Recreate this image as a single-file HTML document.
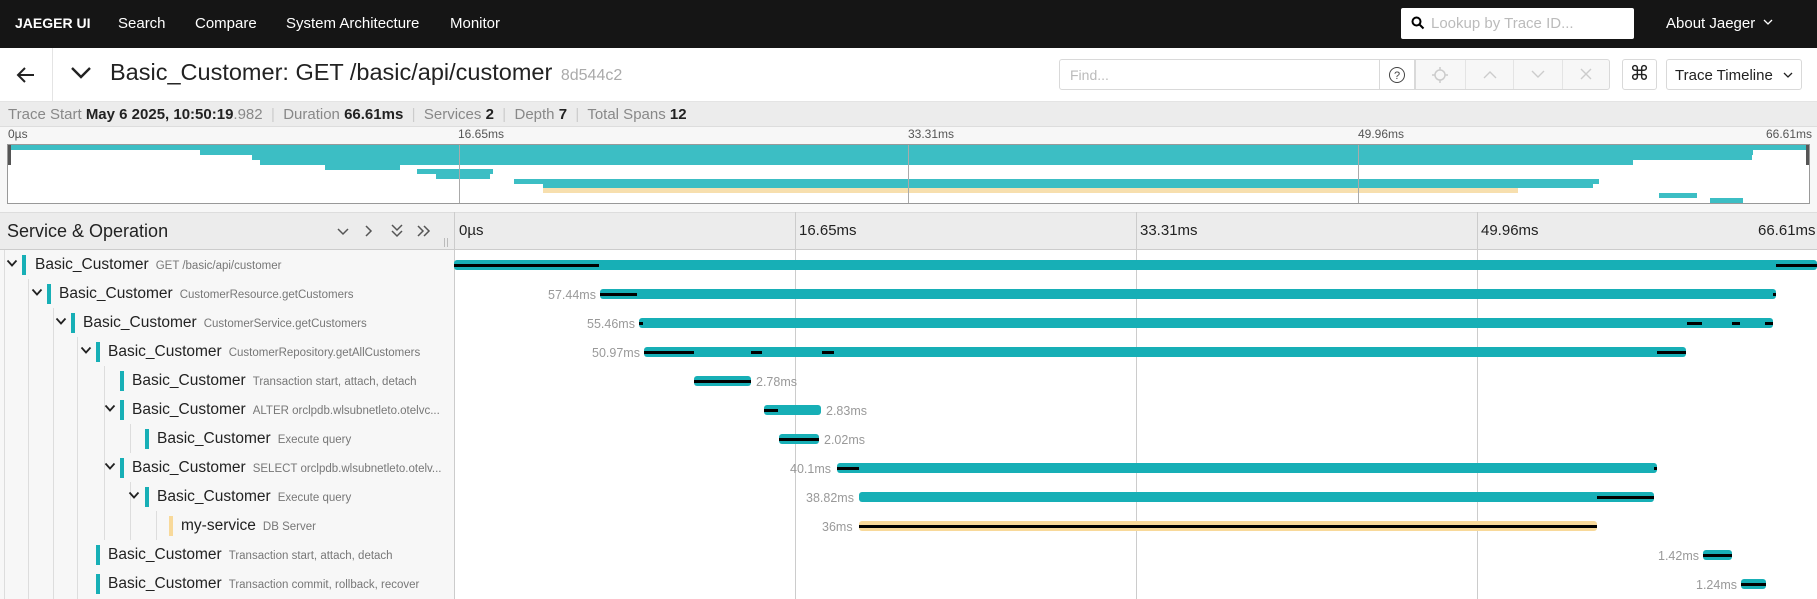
<!DOCTYPE html>
<html><head><meta charset="utf-8"><style>
*{box-sizing:border-box;margin:0;padding:0}
body{width:1817px;height:599px;overflow:hidden;font-family:"Liberation Sans",sans-serif;background:#fff;position:relative;color:#222}
.a{position:absolute}
.nav{left:0;top:0;width:1817px;height:48px;background:#151515;color:#fff;font-size:15px}
.nav span{position:absolute;top:15px}
.btn{position:absolute;top:59px;height:31px;border:1px solid #d9d9d9;background:#fff}
.row{position:absolute;left:0;width:454px;height:29px}
.svc{position:absolute;top:6px;font-size:15.5px;color:#222;white-space:nowrap}
.op{font-size:11.5px;color:#777;margin-left:7px}
.cb{position:absolute;top:5px;width:4px;height:20px;background:#17afb6}
.tg{position:absolute;top:9px;width:12px;height:9px}
.g{position:absolute;width:1px;background:#ddd}
.bar{position:absolute;height:10px;background:#17afb6;border-radius:3px}
.cp{position:absolute;height:3px;background:#000;top:3.5px}
.lb{position:absolute;font-size:12.5px;color:#999;white-space:nowrap}
.mm{position:absolute;background:#3cbec4;height:5px}
.tk{position:absolute;top:127px;font-size:12px;color:#555}
</style></head><body>
<svg width="0" height="0" style="position:absolute"><defs><symbol id="chev" viewBox="0 0 12 9"><path d="M1.5 1.5l4.5 5 4.5-5" fill="none" stroke="#222" stroke-width="1.8"/></symbol></defs></svg>
<div class="a nav">
<span style="left:15px;font-weight:bold;font-size:14px">JAEGER UI</span>
<span style="left:118px">Search</span>
<span style="left:195px">Compare</span>
<span style="left:286px">System Architecture</span>
<span style="left:450px">Monitor</span>
<div class="a" style="left:1401px;top:8px;width:233px;height:31px;background:#fff;border-radius:2px"><svg class="a" style="left:10px;top:8px" width="14" height="14" viewBox="0 0 14 14"><circle cx="5.5" cy="5.5" r="4" fill="none" stroke="#000" stroke-width="2"/><path d="M8.5 8.5l4 4" stroke="#000" stroke-width="2"/></svg><span style="left:30px;top:7px;color:#bbb;font-size:15px">Lookup by Trace ID...</span></div>
<span style="left:1666px">About Jaeger</span>
<svg class="a" style="left:1763px;top:19px" width="10" height="8"><path d="M1 1l4 4 4-4" fill="none" stroke="#fff" stroke-width="1.3"/></svg>
</div>
<div class="a" style="left:0;top:48px;width:1817px;height:54px;background:#fff;border-bottom:1px solid #e4e4e4"></div>
<div class="a" style="left:52px;top:48px;width:1px;height:54px;background:#e4e4e4"></div>
<svg class="a" style="left:16px;top:66px" width="20" height="18"><path d="M18 9H3M9 2L2 9l7 7" fill="none" stroke="#222" stroke-width="2"/></svg>
<svg class="a" style="left:70px;top:66px" width="22" height="14"><path d="M2 2l9 9 9-9" fill="none" stroke="#222" stroke-width="2.4"/></svg>
<div class="a" style="left:110px;top:59px;font-size:23.5px;color:#222;white-space:nowrap">Basic_Customer: GET /basic/api/customer <span style="font-size:16px;color:#aaa;margin-left:2px">8d544c2</span></div>
<div class="btn" style="left:1059px;width:321px;border-radius:3px 0 0 3px"><span class="a" style="left:10px;top:7px;color:#bbb;font-size:14px">Find...</span></div>
<div class="btn" style="left:1379px;width:36px"><svg class="a" style="left:8px;top:6px" width="18" height="18"><circle cx="9" cy="9" r="7.5" fill="none" stroke="#444"/><text x="9" y="13" font-size="11" text-anchor="middle" fill="#444" font-family="Liberation Sans">?</text></svg></div>
<div class="btn" style="left:1415px;width:195px;background:#f7f7f7;border-radius:0 3px 3px 0"></div>
<div class="a" style="left:1465px;top:60px;width:1px;height:29px;background:#e4e4e4"></div>
<div class="a" style="left:1513px;top:60px;width:1px;height:29px;background:#e4e4e4"></div>
<div class="a" style="left:1562px;top:60px;width:1px;height:29px;background:#e4e4e4"></div>
<svg class="a" style="left:1431px;top:66px" width="18" height="18"><circle cx="9" cy="9" r="5" fill="none" stroke="#ccc" stroke-width="1.5"/><path d="M9 1v3M9 14v3M1 9h3M14 9h3" stroke="#ccc" stroke-width="1.5"/></svg>
<svg class="a" style="left:1483px;top:70px" width="14" height="9"><path d="M1 8l6-6 6 6" fill="none" stroke="#ccc" stroke-width="1.4"/></svg>
<svg class="a" style="left:1531px;top:70px" width="14" height="9"><path d="M1 1l6 6 6-6" fill="none" stroke="#ccc" stroke-width="1.4"/></svg>
<svg class="a" style="left:1580px;top:68px" width="12" height="12"><path d="M1 1l10 10M11 1L1 11" stroke="#ccc" stroke-width="1.4"/></svg>
<div class="btn" style="left:1622px;width:35px;border-radius:3px;font-size:20px;text-align:center;line-height:28px">⌘</div>
<div class="btn" style="left:1666px;width:136px;border-radius:3px"><span class="a" style="left:8px;top:7px;font-size:15px">Trace Timeline</span><svg class="a" style="left:116px;top:12px" width="10" height="7"><path d="M1 1l4 4 4-4" fill="none" stroke="#222" stroke-width="1.3"/></svg></div>
<div class="a" style="left:0;top:102px;width:1817px;height:25px;background:#ececec;border-bottom:1px solid #ddd;font-size:15px;color:#888;padding:4px 0 0 8px;white-space:nowrap">Trace Start <b style="color:#222">May 6 2025, 10:50:19</b>.982 <span style="color:#ccc">&nbsp;|&nbsp;</span> Duration <b style="color:#222">66.61ms</b> <span style="color:#ccc">&nbsp;|&nbsp;</span> Services <b style="color:#222">2</b> <span style="color:#ccc">&nbsp;|&nbsp;</span> Depth <b style="color:#222">7</b> <span style="color:#ccc">&nbsp;|&nbsp;</span> Total Spans <b style="color:#222">12</b></div>
<div class="a" style="left:0;top:127px;width:1817px;height:85px;background:#f7f7f7"></div>
<div class="tk" style="left:8px">0µs</div>
<div class="tk" style="left:458px">16.65ms</div>
<div class="tk" style="left:908px">33.31ms</div>
<div class="tk" style="left:1358px">49.96ms</div>
<div class="tk" style="left:1766px">66.61ms</div>
<div class="a" style="left:7px;top:144px;width:1803px;height:60px;background:#fff;border:1px solid #999;overflow:hidden">
<div class="mm" style="left:0;top:0;width:1803px"></div>
<div class="mm" style="left:192px;top:5px;width:1553px"></div>
<div class="mm" style="left:244px;top:10px;width:1500px"></div>
<div class="mm" style="left:252px;top:15px;width:1373px"></div>
<div class="mm" style="left:317px;top:20px;width:75px"></div>
<div class="mm" style="left:409px;top:24px;width:76px"></div>
<div class="mm" style="left:428px;top:29px;width:54px"></div>
<div class="mm" style="left:506px;top:34px;width:1085px"></div>
<div class="mm" style="left:535px;top:38px;width:1050px"></div>
<div class="mm" style="left:535px;top:43px;width:975px;background:#f7dfae"></div>
<div class="mm" style="left:1651px;top:48px;width:38px"></div>
<div class="mm" style="left:1702px;top:53px;width:33px"></div>
<div class="a" style="left:451px;top:0;width:1px;height:60px;background:#aaa"></div>
<div class="a" style="left:900px;top:0;width:1px;height:60px;background:#aaa"></div>
<div class="a" style="left:1350px;top:0;width:1px;height:60px;background:#aaa"></div>
<div class="a" style="left:0;top:0;width:3px;height:20px;background:#555"></div>
<div class="a" style="right:0;top:0;width:3px;height:20px;background:#555"></div>
</div>
<div class="a" style="left:0;top:212px;width:1817px;height:38px;background:#ececec;border-top:1px solid #ddd;border-bottom:1px solid #ccc"></div>
<div class="a" style="left:7px;top:221px;font-size:18px;color:#222">Service &amp; Operation</div>
<svg class="a" style="left:336px;top:224px" width="110" height="16" fill="none" stroke="#555" stroke-width="1.5"><path d="M2 5l5 5 5-5"/><path d="M30 2l5 5-5 5"/><path d="M56 1l5 5 5-5M56 7l5 5 5-5"/><path d="M82 2l5 5-5 5M88 2l5 5-5 5"/></svg>
<div class="a" style="left:444px;top:238px;width:4px;height:9px;border-left:1px solid #bbb;border-right:1px solid #bbb"></div>
<div class="a" style="left:454px;top:212px;width:1px;height:387px;background:#ccc"></div>
<div class="a" style="left:459px;top:222px;font-size:15px;color:#222">0µs</div>
<div class="a" style="left:799px;top:222px;font-size:15px;color:#222">16.65ms</div>
<div class="a" style="left:1140px;top:222px;font-size:15px;color:#222">33.31ms</div>
<div class="a" style="left:1481px;top:222px;font-size:15px;color:#222">49.96ms</div>
<div class="a" style="left:1758px;top:222px;font-size:15px;color:#222">66.61ms</div>
<div class="a" style="left:795px;top:212px;width:1px;height:387px;background:#ccc"></div>
<div class="a" style="left:1136px;top:212px;width:1px;height:387px;background:#ccc"></div>
<div class="a" style="left:1477px;top:212px;width:1px;height:387px;background:#ccc"></div>
<div class="a" style="left:0;top:250px;width:454px;height:349px;background:#f7f7f7"></div>
<div class="g" style="left:4px;top:250px;height:349px"></div>
<div class="g" style="left:28px;top:279px;height:320px"></div>
<div class="g" style="left:53px;top:308px;height:291px"></div>
<div class="g" style="left:77px;top:337px;height:262px"></div>
<div class="g" style="left:104px;top:366px;height:174px"></div>
<div class="g" style="left:130px;top:424px;height:29px"></div>
<div class="g" style="left:130px;top:482px;height:58px"></div>
<div class="g" style="left:156px;top:511px;height:29px"></div>

<div class="row" style="top:250px"><svg class="tg" style="left:6px"><use href="#chev"/></svg><div class="cb" style="left:22px"></div><div class="svc" style="left:35px">Basic_Customer<span class="op">GET /basic/api/customer</span></div></div>
<div class="row" style="top:279px"><svg class="tg" style="left:31px"><use href="#chev"/></svg><div class="cb" style="left:47px"></div><div class="svc" style="left:59px">Basic_Customer<span class="op">CustomerResource.getCustomers</span></div></div>
<div class="row" style="top:308px"><svg class="tg" style="left:55px"><use href="#chev"/></svg><div class="cb" style="left:71px"></div><div class="svc" style="left:83px">Basic_Customer<span class="op">CustomerService.getCustomers</span></div></div>
<div class="row" style="top:337px"><svg class="tg" style="left:80px"><use href="#chev"/></svg><div class="cb" style="left:96px"></div><div class="svc" style="left:108px">Basic_Customer<span class="op">CustomerRepository.getAllCustomers</span></div></div>
<div class="row" style="top:366px"><div class="cb" style="left:120px"></div><div class="svc" style="left:132px">Basic_Customer<span class="op">Transaction start, attach, detach</span></div></div>
<div class="row" style="top:395px"><svg class="tg" style="left:104px"><use href="#chev"/></svg><div class="cb" style="left:120px"></div><div class="svc" style="left:132px">Basic_Customer<span class="op">ALTER orclpdb.wlsubnetleto.otelvc...</span></div></div>
<div class="row" style="top:424px"><div class="cb" style="left:145px"></div><div class="svc" style="left:157px">Basic_Customer<span class="op">Execute query</span></div></div>
<div class="row" style="top:453px"><svg class="tg" style="left:104px"><use href="#chev"/></svg><div class="cb" style="left:120px"></div><div class="svc" style="left:132px">Basic_Customer<span class="op">SELECT orclpdb.wlsubnetleto.otelv...</span></div></div>
<div class="row" style="top:482px"><svg class="tg" style="left:128px"><use href="#chev"/></svg><div class="cb" style="left:145px"></div><div class="svc" style="left:157px">Basic_Customer<span class="op">Execute query</span></div></div>
<div class="row" style="top:511px"><div class="cb" style="left:169px;background:#f8d99a"></div><div class="svc" style="left:181px">my-service<span class="op">DB Server</span></div></div>
<div class="row" style="top:540px"><div class="cb" style="left:96px"></div><div class="svc" style="left:108px">Basic_Customer<span class="op">Transaction start, attach, detach</span></div></div>
<div class="row" style="top:569px"><div class="cb" style="left:96px"></div><div class="svc" style="left:108px">Basic_Customer<span class="op">Transaction commit, rollback, recover</span></div></div>

<div class="bar" style="left:454px;top:260px;width:1363px"><div class="cp" style="left:0;width:145px"></div><div class="cp" style="left:1322px;width:41px"></div></div>
<div class="lb" style="left:548px;top:288px">57.44ms</div>
<div class="bar" style="left:600px;top:289px;width:1176px"><div class="cp" style="left:0;width:37px"></div><div class="cp" style="left:1173px;width:3px"></div></div>
<div class="lb" style="left:587px;top:317px">55.46ms</div>
<div class="bar" style="left:639px;top:318px;width:1134px"><div class="cp" style="left:0;width:4px"></div><div class="cp" style="left:1048px;width:15px"></div><div class="cp" style="left:1093px;width:8px"></div><div class="cp" style="left:1126px;width:8px"></div></div>
<div class="lb" style="left:592px;top:346px">50.97ms</div>
<div class="bar" style="left:644px;top:347px;width:1042px"><div class="cp" style="left:0;width:50px"></div><div class="cp" style="left:107px;width:11px"></div><div class="cp" style="left:178px;width:12px"></div><div class="cp" style="left:1013px;width:29px"></div></div>
<div class="bar" style="left:694px;top:376px;width:57px"><div class="cp" style="left:0;width:57px"></div></div>
<div class="lb" style="left:756px;top:375px">2.78ms</div>
<div class="bar" style="left:764px;top:405px;width:57px"><div class="cp" style="left:0;width:14px"></div></div>
<div class="lb" style="left:826px;top:404px">2.83ms</div>
<div class="bar" style="left:779px;top:434px;width:40px"><div class="cp" style="left:0;width:40px"></div></div>
<div class="lb" style="left:824px;top:433px">2.02ms</div>
<div class="lb" style="left:790px;top:462px">40.1ms</div>
<div class="bar" style="left:837px;top:463px;width:820px"><div class="cp" style="left:0;width:22px"></div><div class="cp" style="left:817px;width:3px"></div></div>
<div class="lb" style="left:806px;top:491px">38.82ms</div>
<div class="bar" style="left:859px;top:492px;width:795px"><div class="cp" style="left:738px;width:57px"></div></div>
<div class="lb" style="left:822px;top:520px">36ms</div>
<div class="bar" style="left:859px;top:521px;width:738px;background:#f8d99a"><div class="cp" style="left:0;width:738px"></div></div>
<div class="lb" style="left:1658px;top:549px">1.42ms</div>
<div class="bar" style="left:1703px;top:550px;width:29px"><div class="cp" style="left:0;width:29px"></div></div>
<div class="lb" style="left:1696px;top:578px">1.24ms</div>
<div class="bar" style="left:1741px;top:579px;width:25px"><div class="cp" style="left:0;width:25px"></div></div>
</body></html>
